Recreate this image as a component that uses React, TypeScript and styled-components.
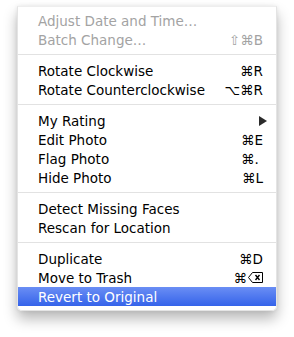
import styled, { createGlobalStyle } from 'styled-components'

const GlobalStyle = createGlobalStyle`
  html, body {
    margin: 0;
    padding: 0;
    background: #ffffff;
  }
`

const Page = styled.div`
  padding: 6px 17px 0 17px;
  width: 294px;
  height: 337px;
  box-sizing: border-box;
`

const Menu = styled.div`
  width: 260px;
  background: rgba(255, 255, 255, 0.98);
  border: 1px solid #e4e4e4;
  border-top-color: #eeeeee;
  border-radius: 0 0 5px 5px;
  padding: 4px 0 4px 0;
  box-sizing: border-box;
  box-shadow: 0 8px 14px rgba(0, 0, 0, 0.28), 0 0 4px rgba(0, 0, 0, 0.08);
  font-family: 'DejaVu Sans', 'Liberation Sans', sans-serif;
  font-size: 13.5px;
  color: #000000;
`

const Item = styled.div<{ disabled?: boolean; active?: boolean }>`
  height: 19px;
  display: flex;
  align-items: center;
  justify-content: space-between;
  padding: 0 13px 0 20px;
  color: ${({ disabled, active }) => (active ? '#ffffff' : disabled ? '#a3a3a3' : '#000000')};
  background: ${({ active }) => (active ? 'linear-gradient(#6a8ef4, #3563ea)' : 'none')};
  white-space: nowrap;
`

const Shortcut = styled.span`
  display: flex;
  align-items: center;
  gap: 1px;
`

const Separator = styled.div`
  height: 1px;
  background: #e2e2e2;
  margin: 5px 0 6px 0;
`

const Arrow = styled.span`
  width: 0;
  height: 0;
  border-top: 5px solid transparent;
  border-bottom: 5px solid transparent;
  border-left: 8px solid #2b2b2b;
  margin-right: -4px;
`

const DeleteKey = () => (
  <svg width='15' height='11' viewBox='0 0 15 11'>
    <path d='M4.5 0.5 H14.5 V10.5 H4.5 L0.5 5.5 Z' fill='none' stroke='#000' strokeWidth='1' />
    <path d='M7.5 3 L11.5 8 M11.5 3 L7.5 8' stroke='#000' strokeWidth='1.4' />
  </svg>
)

export default function App() {
  return (
    <>
      <GlobalStyle />
      <Page>
        <Menu>
          <Item disabled>
            <span>Adjust Date and Time…</span>
          </Item>
          <Item disabled>
            <span>Batch Change…</span>
            <Shortcut>⇧⌘B</Shortcut>
          </Item>
          <Separator />
          <Item>
            <span>Rotate Clockwise</span>
            <Shortcut>⌘R</Shortcut>
          </Item>
          <Item>
            <span>Rotate Counterclockwise</span>
            <Shortcut>⌥⌘R</Shortcut>
          </Item>
          <Separator />
          <Item>
            <span>My Rating</span>
            <Arrow />
          </Item>
          <Item>
            <span>Edit Photo</span>
            <Shortcut>⌘E</Shortcut>
          </Item>
          <Item>
            <span>Flag Photo</span>
            <Shortcut>⌘.&nbsp;</Shortcut>
          </Item>
          <Item>
            <span>Hide Photo</span>
            <Shortcut>⌘L</Shortcut>
          </Item>
          <Separator />
          <Item>
            <span>Detect Missing Faces</span>
          </Item>
          <Item>
            <span>Rescan for Location</span>
          </Item>
          <Separator />
          <Item>
            <span>Duplicate</span>
            <Shortcut>⌘D</Shortcut>
          </Item>
          <Item>
            <span>Move to Trash</span>
            <Shortcut>
              ⌘<DeleteKey />
            </Shortcut>
          </Item>
          <Item active>
            <span>Revert to Original</span>
          </Item>
        </Menu>
      </Page>
    </>
  )
}
